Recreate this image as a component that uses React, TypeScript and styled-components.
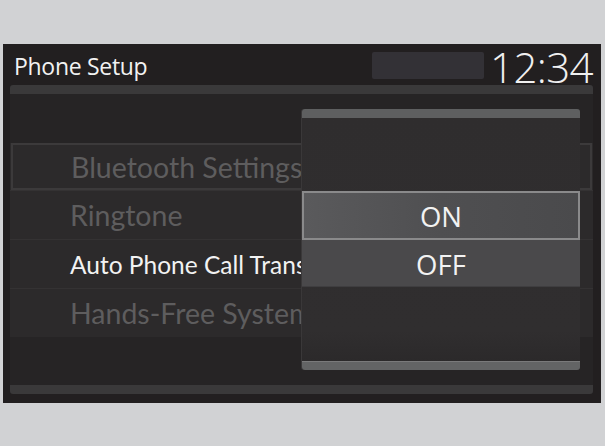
import React from 'react'
import styled, { createGlobalStyle } from 'styled-components'

const GlobalStyle = createGlobalStyle`
  html, body {
    margin: 0;
    padding: 0;
    background: #d1d2d4;
  }
  body {
    padding: 44px 0 0 3px;
    width: 605px;
    height: 446px;
    box-sizing: border-box;
    overflow: hidden;
  }
`

const Screen = styled.div`
  width: 598px;
  height: 359px;
  background: #221f20;
  display: flex;
  flex-direction: column;
  padding: 0 8px 9px 7px;
  box-sizing: border-box;
`

const Header = styled.div`
  height: 41px;
  display: flex;
  align-items: flex-start;
  position: relative;
`

const Title = styled.div`
  font-family: 'Open Sans', 'Noto Sans', sans-serif;
  font-size: 23px;
  color: #f2f2f2;
  margin: 6px 0 0 4px;
  letter-spacing: -0.3px;
  flex: 1;
`

const StatusSlot = styled.div`
  width: 112px;
  height: 27px;
  margin-top: 8px;
  background: #333136;
  border-radius: 2px;
`

const Clock = styled.div`
  font-family: 'Open Sans', 'Noto Sans', sans-serif;
  font-weight: 300;
  font-size: 42px;
  line-height: 1;
  color: #f0f0f0;
  margin: 2px 0 0 6px;
  letter-spacing: -0.6px;
`

const Panel = styled.div`
  flex: 1;
  display: flex;
  flex-direction: column;
  position: relative;
`

const PanelBar = styled.div<{ $bottom?: boolean }>`
  height: 9px;
  background: #3a393a;
  border-radius: ${({ $bottom }) => ($bottom ? '0 0 3px 3px' : '3px 3px 0 0')};
`

const PanelBody = styled.div`
  flex: 1;
  background: #262425;
  display: flex;
  flex-direction: column;
  padding-top: 49px;
`

const List = styled.div`
  background: #2c2a2b;
  display: flex;
  flex-direction: column;
`

const Row = styled.div<{ $focused?: boolean; $active?: boolean }>`
  height: ${({ $focused }) => ($focused ? '47px' : '49px')};
  box-sizing: border-box;
  display: flex;
  align-items: center;
  padding-left: ${({ $focused }) => ($focused ? '58px' : '60px')};
  margin: ${({ $focused }) => ($focused ? '0 1px 0 1px' : '0')};
  border: ${({ $focused }) => ($focused ? '2px solid #3c3a3b' : 'none')};
  border-top: ${({ $focused }) =>
    $focused ? '2px solid #3c3a3b' : '1px solid #343233'};
  font-family: Lato, 'Open Sans', sans-serif;
  font-size: ${({ $active }) => ($active ? '24.5px' : '28.5px')};
  color: ${({ $active }) => ($active ? '#f2f2f2' : '#5e5d5e')};
  white-space: nowrap;
  overflow: hidden;
`

const Popup = styled.div`
  position: absolute;
  left: 292px;
  top: 24px;
  width: 278px;
  height: 261px;
  display: flex;
  flex-direction: column;
  background: linear-gradient(180deg, #2f2d2e 0%, #302e2f 85%, #2a2829 100%);
  border-radius: 3px;
  box-shadow: -1px 0 0 #3a3839;
`

const PopupBar = styled.div<{ $bottom?: boolean }>`
  height: 9px;
  background: ${({ $bottom }) => ($bottom ? '#636465' : '#5e5f60')};
  border-top: ${({ $bottom }) => ($bottom ? '1px solid #7a7a7b' : 'none')};
  box-sizing: border-box;
  border-radius: ${({ $bottom }) => ($bottom ? '0 0 3px 3px' : '3px 3px 0 0')};
`

const PopupSpacer = styled.div<{ $h: number }>`
  height: ${({ $h }) => $h}px;
`

const Option = styled.div<{ $selected?: boolean }>`
  height: ${({ $selected }) => ($selected ? '49px' : '47px')};
  box-sizing: border-box;
  display: flex;
  align-items: center;
  justify-content: center;
  font-family: 'Open Sans', 'Noto Sans', sans-serif;
  font-size: 27.5px;
  color: #f2f2f2;
  background: ${({ $selected }) =>
    $selected
      ? 'linear-gradient(90deg, #5a5a5c 0%, #4f4f51 50%, #4a4a4c 100%)'
      : '#4a494b'};
  border: ${({ $selected }) => ($selected ? '2px solid #8a8a8b' : 'none')};
  border-bottom: ${({ $selected }) =>
    $selected ? '2px solid #8a8a8b' : '1px solid #3f3e40'};
  padding-top: 2px;
`

const rows = [
  { label: 'Bluetooth Settings', focused: true },
  { label: 'Ringtone' },
  { label: 'Auto Phone Call Transfer', active: true },
  { label: 'Hands-Free System Volume' },
]

export default function App() {
  return (
    <>
      <GlobalStyle />
      <Screen>
        <Header>
          <Title>Phone Setup</Title>
          <StatusSlot />
          <Clock>12:34</Clock>
        </Header>
        <Panel>
          <PanelBar />
          <PanelBody>
            <List>
              {rows.map((r) => (
                <Row key={r.label} $focused={r.focused} $active={r.active}>
                  {r.label}
                </Row>
              ))}
            </List>
          </PanelBody>
          <PanelBar $bottom />
          <Popup>
            <PopupBar />
            <PopupSpacer $h={73} />
            <Option $selected>ON</Option>
            <Option>OFF</Option>
            <PopupSpacer $h={74} />
            <PopupBar $bottom />
          </Popup>
        </Panel>
      </Screen>
    </>
  )
}
